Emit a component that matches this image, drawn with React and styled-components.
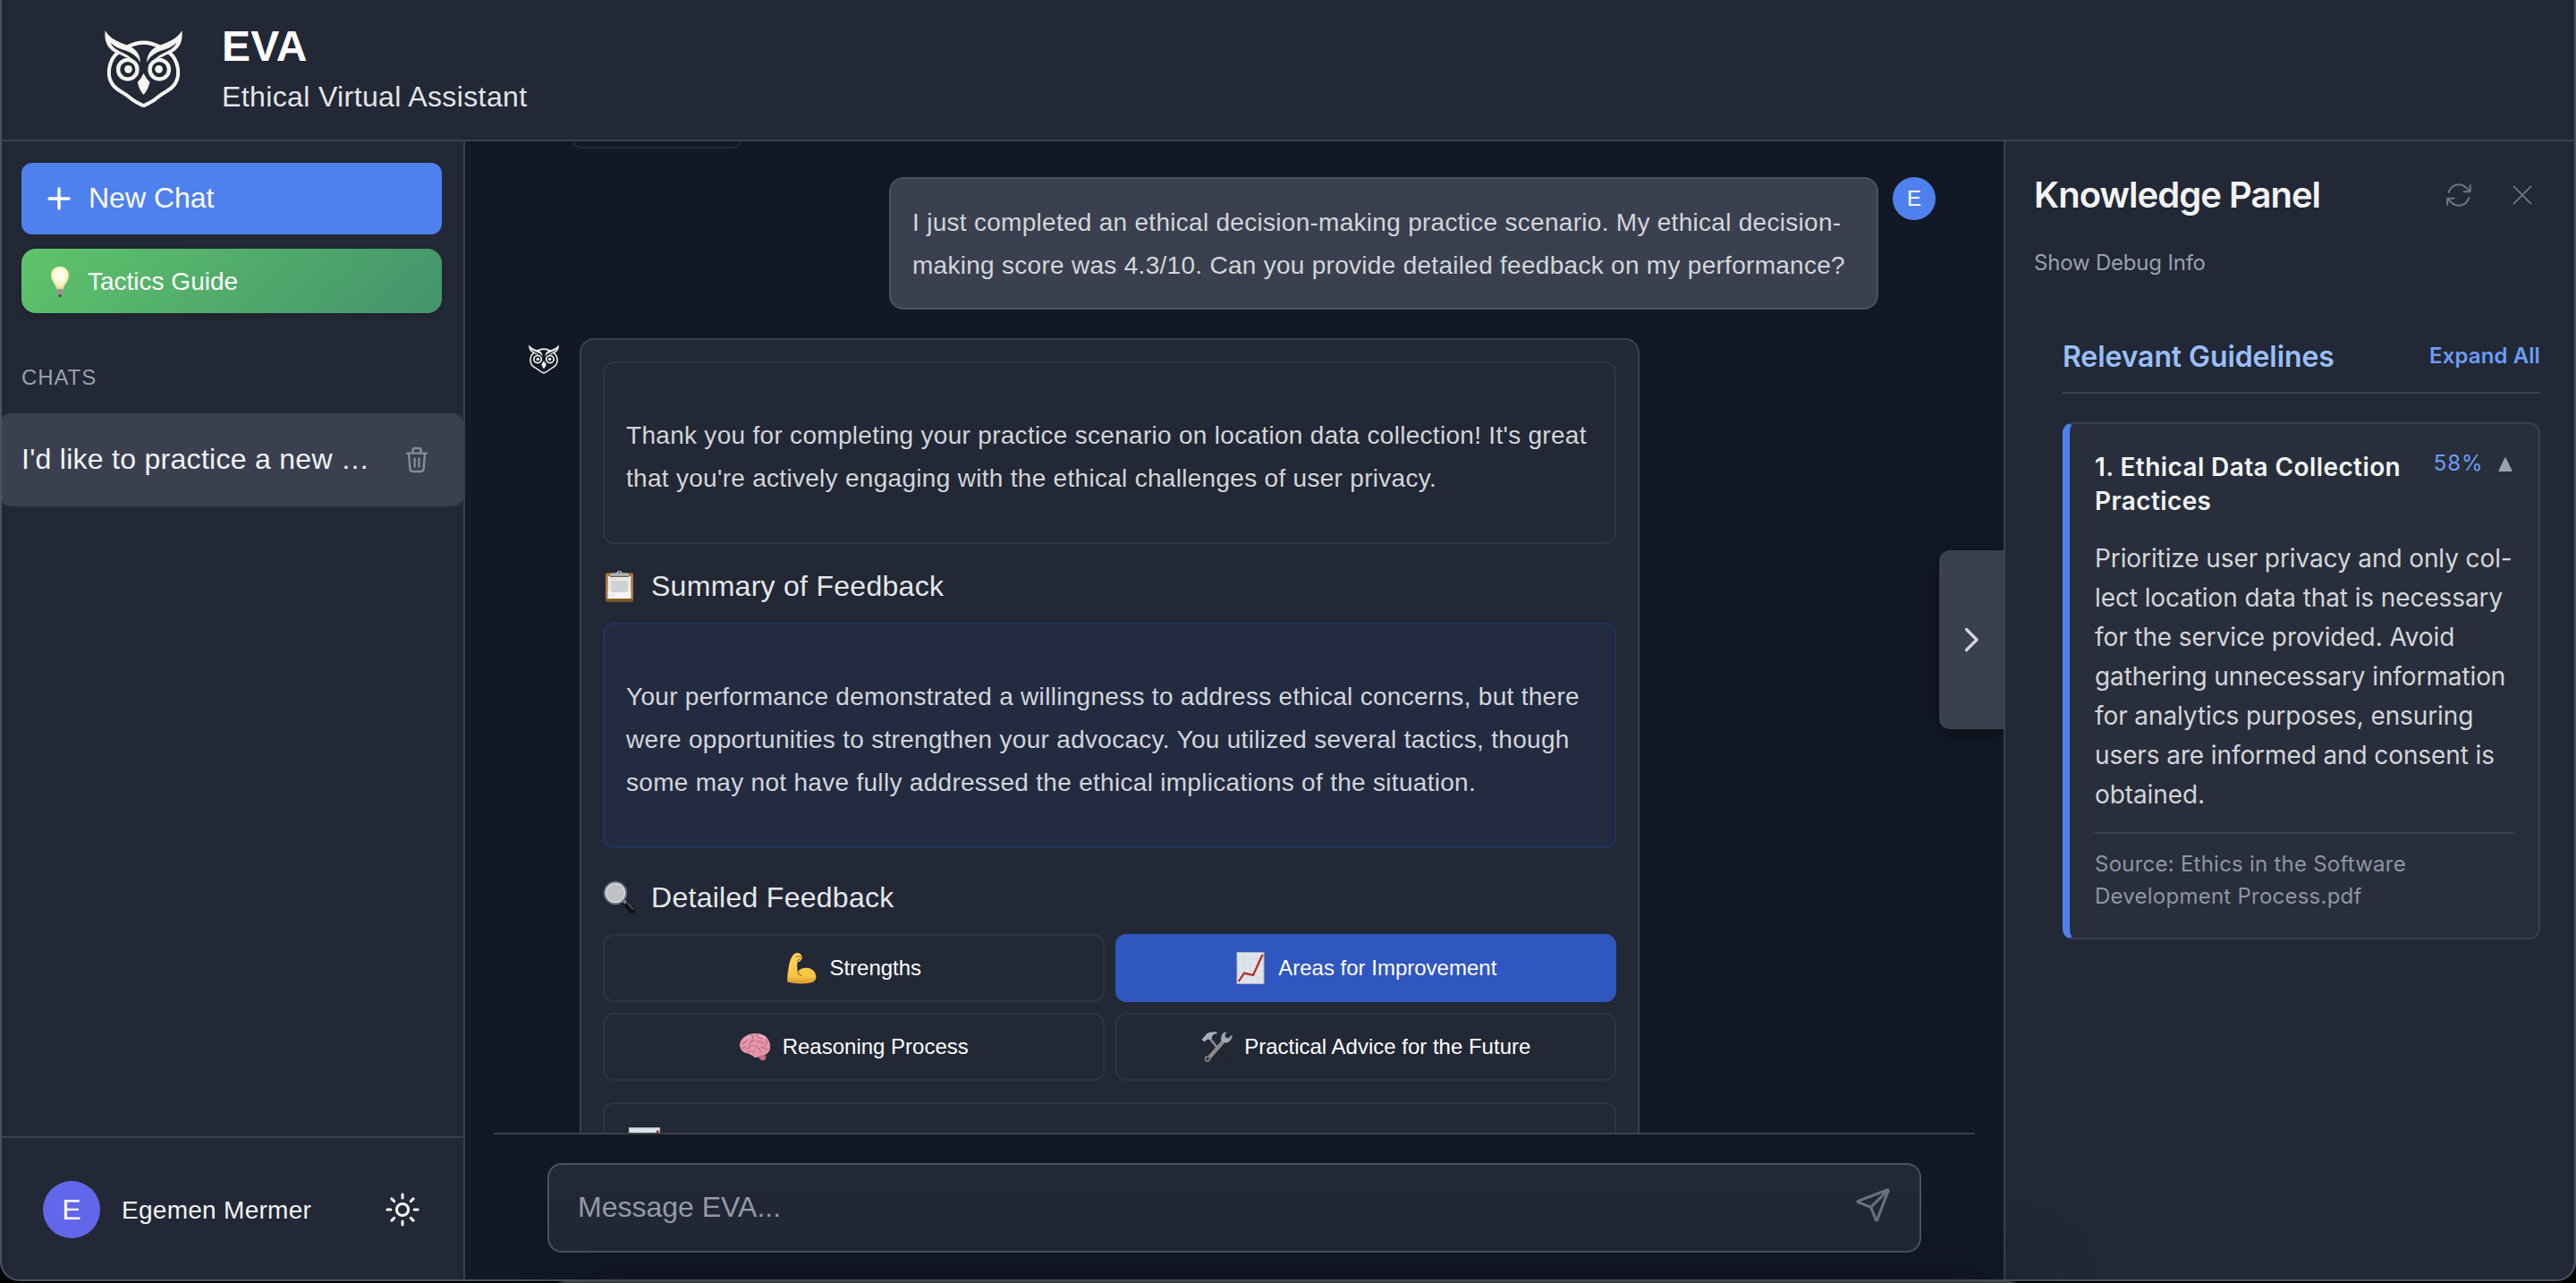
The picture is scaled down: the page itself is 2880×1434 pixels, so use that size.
import React from 'react';
import styled, { createGlobalStyle } from 'styled-components';
import { IoPaperPlaneOutline, IoSunnyOutline } from 'react-icons/io5';

const c = {
  panel: '#222835',
  main: '#121825',
  line: '#3a404d',
  raised: '#3a404f',
  strong: '#4c5260',
  blue: '#4f81ee',
  text: '#f3f4f6',
  soft: '#d3d5da',
  muted: '#9aa0ae',
  dim: '#6d7380',
};

const GlobalStyle = createGlobalStyle`
  * { box-sizing: border-box; }
  body { margin: 0; background: #000; overflow: hidden; }
  button, input { font: inherit; color: inherit; border: 0; background: none; padding: 0; margin: 0; }
  svg { display: block; flex: none; }
  p, h1, h2, h3 { margin: 0; font-weight: 400; }
`;

const Page = styled.div`
  position: relative;
  width: 2880px;
  height: 1434px;
  overflow: hidden;
  background: #000;
  font-family: 'Liberation Sans', Arial, sans-serif;
  letter-spacing: 0.28px;
  color: ${c.text};
`;

const Window = styled.div`
  width: 2880px;
  height: 1432px;
  display: flex;
  flex-direction: column;
  background: ${c.panel};
  border-radius: 0 0 22px 22px;
  overflow: hidden;
`;

const Frame = styled.div`
  position: absolute;
  inset: -10px 0 2px 0;
  border: 2px solid #4d535e;
  border-radius: 0 0 22px 22px;
  pointer-events: none;
`;

const Dock = styled.div`
  position: absolute;
  left: 612px;
  top: 1432px;
  width: 1654px;
  height: 40px;
  border-radius: 24px;
  background: #3b3c3a;
  box-shadow: 0 0 90px 10px rgba(0, 0, 0, 0.22);
`;

const Header = styled.header`
  height: 158px;
  flex: none;
  display: flex;
  align-items: flex-start;
  border-bottom: 2px solid ${c.line};
  padding: 28px 0 0 100px;
`;

const LogoBox = styled.div`
  width: 120px;
  padding: 6px 0 0 16.5px;
`;

const Brand = styled.div`
  margin-left: 28px;
`;

const BrandName = styled.h1`
  font-size: 48px;
  font-weight: 700;
  line-height: 48px;
  letter-spacing: 0.2px;
  color: #fff;
`;

const BrandLine = styled.p`
  margin-top: 12px;
  font-size: 32px;
  line-height: 40px;
  letter-spacing: 0.38px;
  color: #e3e5e9;
`;

const Body = styled.div`
  flex: 1;
  min-height: 0;
  display: flex;
`;

const Sidebar = styled.aside`
  width: 520px;
  flex: none;
  display: flex;
  flex-direction: column;
  border-right: 2px solid ${c.line};
`;

const Actions = styled.div`
  display: flex;
  flex-direction: column;
  gap: 16px;
  padding: 24px 24px 0;
`;

const NewChat = styled.button`
  height: 80px;
  display: flex;
  align-items: center;
  gap: 17px;
  padding: 0 0 1px 26px;
  border-radius: 12px;
  background: ${c.blue};
  color: #fff;
  font-size: 32px;
`;

const Tactics = styled.button`
  height: 72px;
  display: flex;
  align-items: center;
  gap: 14px;
  padding: 1px 0 0 26px;
  border-radius: 16px;
  background: linear-gradient(135deg, #5fc46a, #43936c);
  box-shadow: 0 4px 8px rgba(0, 0, 0, 0.12);
  color: #fff;
  font-size: 28px;
  letter-spacing: 0;
`;

const SectionLabel = styled.div`
  margin-top: 54px;
  padding-left: 24px;
  font-size: 24px;
  line-height: 36px;
  letter-spacing: 0.9px;
  color: ${c.muted};
`;

const ChatRow = styled.div`
  margin-top: 22px;
  height: 104px;
  display: flex;
  align-items: center;
  justify-content: space-between;
  padding: 0 38px 0 24px;
  border-radius: 12px;
  background: ${c.raised};
  font-size: 32px;
  color: #858b98;
`;

const ChatTitle = styled.span`
  padding-bottom: 1px;
  color: ${c.text};
  white-space: nowrap;
`;

const UserBar = styled.div`
  margin-top: auto;
  height: 162px;
  display: flex;
  align-items: center;
  padding: 0 47px 0 48px;
  border-top: 2px solid ${c.line};
`;

const Avatar = styled.div`
  width: ${(p) => p.$size}px;
  height: ${(p) => p.$size}px;
  flex: none;
  display: flex;
  align-items: center;
  justify-content: center;
  border-radius: 50%;
  background: ${(p) => p.$bg};
  font-size: ${(p) => p.$size / 2}px;
  letter-spacing: 0;
  color: #fff;
`;

const UserName = styled.span`
  margin-left: 24px;
  padding-top: 1px;
  flex: 1;
  font-size: 28px;
`;

const SunIcon = styled(IoSunnyOutline)`
  * { stroke-width: 38px; }
`;

const SendIcon = styled(IoPaperPlaneOutline)`
  margin-bottom: 7px;
  * { stroke-width: 38px; }
`;

const Main = styled.main`
  position: relative;
  width: 1720px;
  flex: none;
  display: flex;
  flex-direction: column;
  background: ${c.main};
`;

const Thread = styled.div`
  flex: 1;
  min-height: 0;
  overflow: hidden;
  padding: 0 76px 0 68px;
  display: flex;
  flex-direction: column;
`;

const CutBubble = styled.div`
  flex: none;
  width: 188px;
  height: 8px;
  margin-left: 53px;
  border: 2px solid #1f2738;
  border-top: 0;
  border-radius: 0 0 12px 12px;
`;

const UserMessage = styled.div`
  flex: none;
  margin-top: 32px;
  display: flex;
  justify-content: flex-end;
  align-items: flex-start;
  gap: 16px;
`;

const UserBubble = styled.div`
  width: 1106px;
  padding: 25px 24px 23px;
  border: 2px solid ${c.strong};
  border-radius: 16px;
  background: ${c.raised};
  font-size: 28px;
  line-height: 48px;
  letter-spacing: 0.285px;
  color: ${c.soft};
  white-space: nowrap;
`;

const BotMessage = styled.div`
  flex: none;
  margin-top: 32px;
  display: flex;
  align-items: flex-start;
`;

const BotIcon = styled.div`
  width: 60px;
  padding: 7px 0 0 3px;
`;

const BotBubble = styled.div`
  width: 1185px;
  height: 1100px;
  padding: 24px;
  border: 2px solid ${c.line};
  border-radius: 16px;
  background: ${c.panel};
`;

const Note = styled.div`
  padding: 57px 24px 47px;
  border: 2px solid ${(p) => (p.$accent ? '#22315f' : '#2d3340')};
  border-radius: 12px;
  background: ${(p) => (p.$accent ? '#232b41' : c.panel)};
  font-size: 28px;
  line-height: 48px;
  letter-spacing: 0.295px;
  color: ${c.soft};
  white-space: nowrap;
`;

const Heading = styled.h2`
  margin: ${(p) => p.$top}px 0 21px;
  height: 40px;
  display: flex;
  align-items: center;
  gap: 17px;
  font-size: 32px;
  line-height: 40px;
  color: #e5e7eb;
`;

const Tabs = styled.div`
  display: grid;
  grid-template-columns: 1fr 1fr;
  gap: 12px;
  margin-bottom: 24px;
`;

const Tab = styled.button`
  height: 76px;
  display: flex;
  align-items: center;
  justify-content: center;
  gap: 13px;
  border: 2px solid ${(p) => (p.$active ? '#3056c0' : '#2d3340')};
  border-radius: 12px;
  background: ${(p) => (p.$active ? '#3056c0' : 'transparent')};
  color: #fff;
  font-size: 24px;
  letter-spacing: 0;
`;

const Detail = styled.div`
  height: 300px;
  padding: 26px 24px;
  border: 2px solid #2d3340;
  border-radius: 12px;
`;

const Composer = styled.div`
  flex: none;
  height: 166px;
  margin: 0 32px;
  padding: 32px 60px 0;
  border-top: 2px solid ${c.line};
`;

const InputBox = styled.div`
  height: 100px;
  display: flex;
  align-items: center;
  padding: 0 31px 0 32px;
  border: 2px solid ${c.strong};
  border-radius: 16px;
  background: ${c.panel};
  color: #6b717d;
`;

const Input = styled.input`
  flex: 1;
  padding-bottom: 2px;
  font-size: 32px;
  outline: none;
  letter-spacing: 0;
  &::placeholder { color: #969cab; opacity: 1; }
`;

const PanelToggle = styled.button`
  position: absolute;
  right: 0;
  top: 457px;
  width: 72px;
  height: 200px;
  display: flex;
  align-items: center;
  justify-content: center;
  border-radius: 12px 0 0 12px;
  background: ${c.raised};
  box-shadow: 0 4px 20px rgba(0, 0, 0, 0.4);
  color: ${c.soft};
`;

const Panel = styled.aside`
  position: relative;
  flex: 1;
  min-width: 0;
  border-left: 2px solid ${c.line};
  background: ${c.panel};
  font-family: Inter, sans-serif;
  padding: 36px 40px 0 32px;
`;

const PanelHead = styled.div`
  height: 48px;
  display: flex;
  align-items: center;
  color: ${c.dim};
`;

const PanelTitle = styled.h2`
  flex: 1;
  font-size: 40px;
  line-height: 48px;
  font-weight: 600;
  letter-spacing: -0.98px;
  color: ${c.text};
`;

const PanelIcons = styled.div`
  display: flex;
  align-items: center;
  gap: 38px;
  margin: 0 4px 1px 0;
`;

const DebugLink = styled.button`
  display: block;
  margin-top: 36px;
  font-size: 24px;
  line-height: 32px;
  letter-spacing: -0.2px;
  color: ${c.muted};
`;

const Guidelines = styled.section`
  margin: 69px 0 0 32px;
`;

const GuidelinesHead = styled.div`
  height: 61px;
  display: flex;
  justify-content: space-between;
  align-items: flex-start;
  border-bottom: 2px solid ${c.line};
`;

const GuidelinesTitle = styled.h3`
  font-size: 32px;
  line-height: 40px;
  font-weight: 600;
  letter-spacing: -0.1px;
  color: #99bff8;
`;

const ExpandAll = styled.button`
  font-size: 24px;
  line-height: 38px;
  font-weight: 600;
  letter-spacing: 0.1px;
  color: #6b9df6;
`;

const Card = styled.article`
  margin-top: 32px;
  height: 578px;
  padding: 29px 28px 0 28px;
  border: 2px solid ${c.line};
  border-left: 8px solid ${c.blue};
  border-radius: 12px;
  background: #282e3b;
  white-space: nowrap;
`;

const CardHead = styled.div`
  display: flex;
  align-items: flex-start;
  justify-content: space-between;
`;

const CardTitle = styled.h3`
  font-size: 28px;
  line-height: 38px;
  font-weight: 600;
  letter-spacing: 0.4px;
`;

const Score = styled.div`
  display: flex;
  align-items: center;
  gap: 16.5px;
  padding-right: 1px;
  font-size: 24px;
  line-height: 30px;
  letter-spacing: 0.9px;
  color: #6b9df6;
`;

const CardText = styled.p`
  margin-top: 23px;
  font-size: 28px;
  line-height: 44px;
  letter-spacing: -0.1px;
  color: ${c.soft};
`;

const Source = styled.div`
  margin-top: 20px;
  padding-top: 16px;
  border-top: 2px solid ${c.line};
  font-size: 24px;
  line-height: 36px;
  letter-spacing: 0.24px;
  color: #8f95a3;
`;

const OwlHalf = () => (
  <>
    <path d="M52 43 C66 69 98 82 128 92 C155 102 169 122 169 149 C160 130 145 118 120 109 C98 102 82 96 70 82 C75 98 92 107 112 117 C124 122 134 129 143 138 L120 131 C108 124 98 121 88 117 C62 104 47 80 52 43Z" fill="#f6f4f0" />
    <path d="M94 116 C64 140 56 190 74 218 C88 242 112 246 132 264 C150 280 164 286 181 293" fill="none" stroke="#f6f4f0" strokeWidth="12" />
    <circle cx="127" cy="172" r="32" fill="none" stroke="#f6f4f0" strokeWidth="13" />
    <circle cx="129" cy="171" r="13" fill="#f6f4f0" />
  </>
);

const Owl = ({ width, height }) => (
  <svg width={width} height={height} viewBox="50 42 260 259" preserveAspectRatio="none">
    <OwlHalf />
    <g transform="translate(360 0) scale(-1 1)"><OwlHalf /></g>
    <path d="M126 97 Q180 68 234 97" fill="none" stroke="#f6f4f0" strokeWidth="13" />
    <path d="M180 185 Q190 204 201 214 Q195 240 180 256 Q165 240 160 214 Q171 204 180 185Z" fill="#f6f4f0" />
  </svg>
);

const BulbIcon = () => (
  <svg width="34" height="36" viewBox="0 0 34 36">
    <defs>
      <radialGradient id="bulb" cx="50%" cy="42%" r="60%">
        <stop offset="0.3" stopColor="#fffdf2" />
        <stop offset="0.75" stopColor="#fbedb5" />
        <stop offset="1" stopColor="#e0c984" />
      </radialGradient>
    </defs>
    <path d="M17 1 C10.5 1 7 5.5 7 11 C7 17 12 19.5 13 26 H21 C22 19.5 27 17 27 11 C27 5.5 23.5 1 17 1Z" fill="url(#bulb)" />
    <path d="M13.3 26 H20.7 V32 Q17 34 13.3 32Z" fill="#a9a5a2" />
    <path d="M13.3 28.4 H20.7 M13.3 30.8 H20.7" stroke="#77726f" strokeWidth="0.9" />
    <path d="M15 32.5 H19 L18 34.8 H16Z" fill="#3c3a3a" />
  </svg>
);

const ClipboardIcon = () => (
  <svg width="37" height="36" viewBox="0 0 37 36">
    <rect x="3" y="3.5" width="31" height="32" rx="1.8" fill="#a9783f" />
    <rect x="5.7" y="7" width="25.6" height="25" fill="#e9e9ea" />
    <rect x="5.7" y="24" width="25.6" height="8" fill="#f4f4f4" />
    <rect x="9" y="12" width="19" height="13" rx="2" fill="#d0d1d3" />
    <path d="M8 9.8 H14 M8 28 H13" stroke="#d0d1d3" strokeWidth="1.2" />
    <rect x="3" y="32.5" width="31" height="3" rx="1" fill="#7d5327" />
    <path d="M8 7.6 V5.4 Q8 3.5 11 3.5 H15 Q16 0.8 18.5 0.8 Q21 0.8 22 3.5 H26 Q29 3.5 29 5.4 V7.6Z" fill="#aeb3b9" />
    <path d="M8 7.4 H29" stroke="#74604c" strokeWidth="1.2" />
    <circle cx="18.5" cy="3" r="1.1" fill="#4c525c" />
  </svg>
);

const MagnifierIcon = () => (
  <svg width="37" height="38" viewBox="0 0 37 38">
    <path d="M24.5 24 L32.5 33.5" stroke="#0f1012" strokeWidth="6.4" strokeLinecap="round" />
    <path d="M22.5 21.5 L26 25.5" stroke="#777b80" strokeWidth="4" />
    <path d="M28 25.5 L33.5 32" stroke="#5b5f64" strokeWidth="1.4" strokeLinecap="round" />
    <circle cx="14" cy="14" r="12" fill="#bfc1c4" stroke="#67727f" strokeWidth="2.4" />
    <circle cx="14" cy="14" r="10.6" fill="none" stroke="#dcdfe2" strokeWidth="1.2" />
  </svg>
);

const ArmIcon = () => (
  <svg width="36" height="36" viewBox="0 0 36 36">
    <defs>
      <linearGradient id="arm" x1="0" y1="0" x2="0" y2="1">
        <stop offset="0" stopColor="#ffd45c" />
        <stop offset="0.75" stopColor="#f8c546" />
        <stop offset="1" stopColor="#d8982a" />
      </linearGradient>
    </defs>
    <path d="M11 1.6 Q15 -0.2 17.5 3 Q19.8 6.2 17.8 9 Q16 11.2 13.5 11.5 Q13 17 13.8 22 Q18 17.5 24 17.8 Q33 18.5 34.4 27 Q34.6 31.5 30.5 33.8 Q26 35.6 18 35.4 Q8 35.6 2.4 33.6 Q1.8 26 3.6 18 Q4.6 10 7.6 5 Q9 2.2 11 1.6Z" fill="url(#arm)" />
    <path d="M12 5.6 Q15 4.2 17.6 6 M13.5 9.5 L16.5 8.2 M13.8 22 Q14.5 25 17.5 26.5" fill="none" stroke="#a8701c" strokeWidth="1.2" strokeLinecap="round" />
  </svg>
);

const ChartIcon = ({ size = 36 }) => (
  <svg width={size} height={size} viewBox="0 0 36 36">
    <rect x="3" y="0.5" width="30" height="35" fill="#dfe5ea" stroke="#aab4c0" strokeWidth="1" />
    <path d="M3 8 H33 M3 15 H33 M3 22 H33 M3 29 H33 M10.5 1 V35 M18 1 V35 M25.5 1 V35" stroke="#cfd9e0" strokeWidth="0.6" />
    <path d="M4.8 33 L11 23.6 L21 26 L31.5 3" fill="none" stroke="#b5261f" strokeWidth="2.2" strokeLinejoin="round" />
  </svg>
);

const BrainIcon = () => (
  <svg width="36" height="36" viewBox="0 0 36 36">
    <path d="M22 26 Q30 25 30.5 30 Q29.5 34 25 33 Q20 29 22 26Z" fill="#c66c82" />
    <path d="M1 17 Q1 10 7 6.5 Q12 2.6 19 3 Q28 3 32 8.5 Q36 14 35 20 Q33.5 26.5 27.5 27 Q23 27.5 21 29.5 Q18 31 16 28.5 Q13 26.5 10 25.5 Q2 24 1 17Z" fill="#e595aa" />
    <path d="M4 15 Q8 13 9 9 M8 21 Q13 20 12 15 Q14 10 18 11 M14 5 Q17 8 15 9 M20 4 Q22 9 27 8 M20 12 Q26 11 27 15 M31 10 Q32 15 29 18 M14 17 Q20 16 21 19 Q25 21 24 25 M25 18 Q29 21 33 20 M10 24 Q15 22 18 24 M4 20 Q6 18 8 18" fill="none" stroke="#c06c85" strokeWidth="1.2" strokeLinecap="round" />
    <path d="M6 11 Q9 7 13 6.5 M22 6 Q27 5.5 29 9" fill="none" stroke="#f7c3cf" strokeWidth="1.2" strokeLinecap="round" />
  </svg>
);

const ToolsIcon = () => (
  <svg width="36" height="36" viewBox="0 0 36 36">
    <path d="M17.5 17 L32 34" stroke="#24272c" strokeWidth="4" strokeLinecap="round" />
    <path d="M10 8 L19 19" stroke="#8c9198" strokeWidth="2.4" />
    <path d="M1.5 10 L7.5 3 Q12 0.5 18.5 1.5 L18.5 3.5 Q14 3 13.5 6 L12 10 L8 9.5 L4.5 12.6Z" fill="#a3b0bf" />
    <path d="M27 10.5 L9 31" stroke="#8e8a8f" strokeWidth="4.2" strokeLinecap="round" />
    <circle cx="8" cy="31.5" r="3.4" fill="#7a777c" />
    <circle cx="8" cy="31.5" r="1.4" fill="#222835" />
    <path d="M29.5 1.5 Q24 1.5 23.5 7 Q22 12 26 13 Q33 15 35.5 7 L35.3 4.5 L31.5 8.5 L28 7.5 L27.5 4.5Z" fill="#a4a9b1" />
  </svg>
);

const TrashIcon = () => (
  <svg width="28" height="30" viewBox="0 0 28 30" fill="none" stroke="currentColor" strokeWidth="2.4" strokeLinecap="round" strokeLinejoin="round">
    <path d="M3 7.6 H25 M9.6 7.4 V3.6 Q9.6 2 11 2 H17 Q18.4 2 18.4 3.6 V7.4 M5 8 L6.4 25 Q6.7 28 9 28 H19 Q21.3 28 21.6 25 L23 8 M11.6 13.5 V22.5 M16.4 13.5 V22.5" />
  </svg>
);

const RefreshIcon = () => (
  <svg width="34" height="34" viewBox="0 0 24 24" fill="none" stroke="currentColor" strokeWidth="1.5" strokeLinecap="round" strokeLinejoin="round">
    <path d="M16.023 9.348h4.992v-.001M2.985 19.644v-4.992m0 0h4.992m-4.993 0 3.181 3.183a8.25 8.25 0 0 0 13.803-3.7M4.031 9.865a8.25 8.25 0 0 1 13.803-3.7l3.181 3.182m0-4.991v4.99" />
  </svg>
);

const CloseIcon = () => (
  <svg width="32" height="32" viewBox="0 0 24 24" fill="none" stroke="currentColor" strokeWidth="1.5" strokeLinecap="round">
    <path d="M5 5 L19 19 M19 5 L5 19" />
  </svg>
);

export default function App() {
  return (
    <Page>
      <GlobalStyle />
      <Window>
        <Header>
          <LogoBox><Owl width={87} height={87} /></LogoBox>
          <Brand>
            <BrandName>EVA</BrandName>
            <BrandLine>Ethical Virtual Assistant</BrandLine>
          </Brand>
        </Header>
        <Body>
          <Sidebar>
            <Actions>
              <NewChat>
                <svg width="32" height="32" viewBox="0 0 32 32" stroke="#fff" strokeWidth="3.4" strokeLinecap="round">
                  <path d="M16 5 V27 M5 16 H27" />
                </svg>
                New Chat
              </NewChat>
              <Tactics><BulbIcon />Tactics Guide</Tactics>
            </Actions>
            <SectionLabel>CHATS</SectionLabel>
            <ChatRow>
              <ChatTitle>I'd like to practice a new …</ChatTitle>
              <TrashIcon />
            </ChatRow>
            <UserBar>
              <Avatar $size={64} $bg="#6266ea">E</Avatar>
              <UserName>Egemen Mermer</UserName>
              <SunIcon size={42} />
            </UserBar>
          </Sidebar>
          <Main>
            <Thread>
              <CutBubble />
              <UserMessage>
                <UserBubble>
                  I just completed an ethical decision-making practice scenario. My ethical decision-<br />
                  making score was 4.3/10. Can you provide detailed feedback on my performance?
                </UserBubble>
                <Avatar $size={48} $bg={c.blue}>E</Avatar>
              </UserMessage>
              <BotMessage>
                <BotIcon><Owl width={34} height={33} /></BotIcon>
                <BotBubble>
                  <Note>
                    Thank you for completing your practice scenario on location data collection! It's great<br />
                    that you're actively engaging with the ethical challenges of user privacy.
                  </Note>
                  <Heading $top={27}><ClipboardIcon />Summary of Feedback</Heading>
                  <Note $accent>
                    Your performance demonstrated a willingness to address ethical concerns, but there<br />
                    were opportunities to strengthen your advocacy. You utilized several tactics, though<br />
                    some may not have fully addressed the ethical implications of the situation.
                  </Note>
                  <Heading $top={35}><MagnifierIcon />Detailed Feedback</Heading>
                  <Tabs>
                    <Tab><ArmIcon />Strengths</Tab>
                    <Tab $active><ChartIcon />Areas for Improvement</Tab>
                    <Tab><BrainIcon />Reasoning Process</Tab>
                    <Tab><ToolsIcon />Practical Advice for the Future</Tab>
                  </Tabs>
                  <Detail><ChartIcon size={41} /></Detail>
                </BotBubble>
              </BotMessage>
            </Thread>
            <Composer>
              <InputBox>
                <Input placeholder="Message EVA..." />
                <SendIcon size={42} />
              </InputBox>
            </Composer>
            <PanelToggle>
              <svg width="32" height="32" viewBox="0 0 32 32" fill="none" stroke="currentColor" strokeWidth="3.4" strokeLinecap="round" strokeLinejoin="round">
                <path d="M10.5 4.5 L22 16 L10.5 27.5" />
              </svg>
            </PanelToggle>
          </Main>
          <Panel>
            <PanelHead>
              <PanelTitle>Knowledge Panel</PanelTitle>
              <PanelIcons><RefreshIcon /><CloseIcon /></PanelIcons>
            </PanelHead>
            <DebugLink>Show Debug Info</DebugLink>
            <Guidelines>
              <GuidelinesHead>
                <GuidelinesTitle>Relevant Guidelines</GuidelinesTitle>
                <ExpandAll>Expand All</ExpandAll>
              </GuidelinesHead>
              <Card>
                <CardHead>
                  <CardTitle>1. Ethical Data Collection<br />Practices</CardTitle>
                  <Score>
                    58%
                    <svg width="16" height="17" viewBox="0 0 16 17"><path d="M8 0.5 L15.6 16 Q15.6 17 14.6 17 H1.4 Q0.4 17 0.4 16Z" fill="#9aa0ae" /></svg>
                  </Score>
                </CardHead>
                <CardText>
                  Prioritize user privacy and only col-<br />
                  lect location data that is necessary<br />
                  for the service provided. Avoid<br />
                  gathering unnecessary information<br />
                  for analytics purposes, ensuring<br />
                  users are informed and consent is<br />
                  obtained.
                </CardText>
                <Source>
                  Source: Ethics in the Software<br />
                  Development Process.pdf
                </Source>
              </Card>
            </Guidelines>
          </Panel>
        </Body>
      </Window>
      <Frame />
      <Dock />
    </Page>
  );
}
